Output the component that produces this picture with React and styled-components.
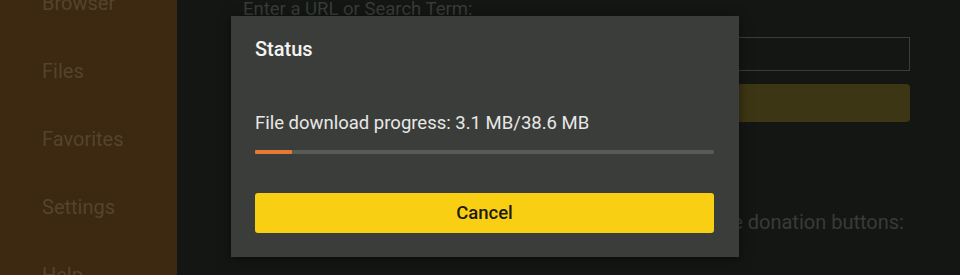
import React from "react";
import styled, { createGlobalStyle } from "styled-components";

const GlobalStyle = createGlobalStyle`
  html, body {
    margin: 0;
    padding: 0;
    background: #141614;
    overflow: hidden;
  }
  * { box-sizing: border-box; }
`;

const menuItems = ["Browser", "Files", "Favorites", "Settings", "Help"];

const App = () => {
  const progress = 3.1 / 38.6;
  return (
    <>
      <GlobalStyle />
      <Screen>
        <Sidebar>
          <MenuList>
            {menuItems.map((item) => (
              <MenuItem key={item}>{item}</MenuItem>
            ))}
          </MenuList>
        </Sidebar>
        <Main>
          <Label>Enter a URL or Search Term:</Label>
          <UrlInput />
          <GoButton />
          <Donation>If you like this app, please consider donating. Please use donation buttons:</Donation>
        </Main>

        <Dialog>
          <Title>Status</Title>
          <Message>File download progress: 3.1 MB/38.6 MB</Message>
          <Track>
            <Fill style={{ width: `${progress * 100}%` }} />
          </Track>
          <CancelButton>Cancel</CancelButton>
        </Dialog>
      </Screen>
    </>
  );
};

const Screen = styled.div`
  position: relative;
  display: flex;
  width: 960px;
  height: 275px;
  overflow: hidden;
  background: #141614;
  font-family: Roboto, "Noto Sans", sans-serif;
`;

const Sidebar = styled.nav`
  flex: 0 0 177px;
  height: 100%;
  background: #3d2811;
  padding-left: 42px;
`;

const MenuList = styled.div`
  display: flex;
  flex-direction: column;
  margin-top: -31px;
`;

const MenuItem = styled.div`
  height: 68px;
  line-height: 68px;
  font-size: 20px;
  color: #54442e;
  white-space: nowrap;
`;

const Main = styled.main`
  flex: 1;
  min-width: 0;
  display: flex;
  flex-direction: column;
  padding: 0 50px 0 66px;
`;

const Label = styled.div`
  margin-top: -3px;
  height: 24px;
  line-height: 24px;
  font-size: 18.5px;
  color: #393b38;
  white-space: nowrap;
`;

const UrlInput = styled.div`
  margin-top: 16px;
  height: 34px;
  border: 1px solid #3a3c39;
`;

const GoButton = styled.div`
  margin-top: 13px;
  height: 38px;
  border-radius: 4px;
  background: #3d3614;
`;

const Donation = styled.div`
  margin-top: 86px;
  line-height: 28px;
  font-size: 20px;
  color: #393b37;
  white-space: nowrap;
`;

const Dialog = styled.div`
  position: absolute;
  left: 231px;
  top: 16px;
  width: 508px;
  height: 241px;
  background: #3b3d3a;
  padding: 21px 25px 24px 24px;
  display: flex;
  flex-direction: column;
  box-shadow: 0 2px 10px rgba(0, 0, 0, 0.5);
`;

const Title = styled.div`
  height: 24px;
  line-height: 24px;
  font-size: 20px;
  font-weight: 500;
  color: #f4f4f2;
`;

const Message = styled.div`
  margin-top: 50px;
  height: 24px;
  line-height: 24px;
  font-size: 18.5px;
  color: #e8e8e6;
  white-space: nowrap;
`;

const Track = styled.div`
  margin-top: 15px;
  height: 4px;
  background: #585a56;
  border-radius: 1px;
`;

const Fill = styled.div`
  height: 100%;
  background: #e67a33;
  border-radius: 1px;
`;

const CancelButton = styled.button`
  margin-top: 39px;
  height: 40px;
  border: none;
  border-radius: 3px;
  background: #f9cf14;
  color: #1f1b0b;
  font-family: Roboto, "Noto Sans", sans-serif;
  font-size: 18.5px;
  font-weight: 500;
  padding: 0;
`;

export default App;
